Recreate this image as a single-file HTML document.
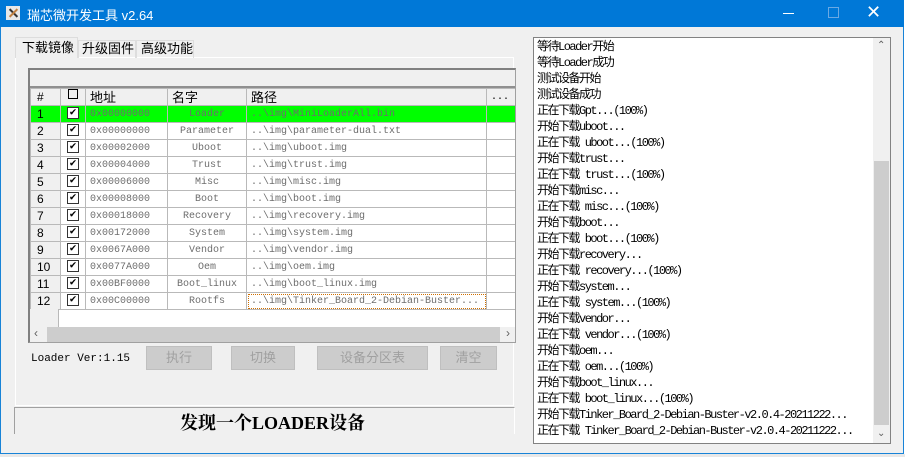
<!DOCTYPE html><html><head><meta charset="utf-8"><style>
*{margin:0;padding:0;box-sizing:border-box}
body{width:905px;height:457px;overflow:hidden;background:#fff;position:relative;font-family:"Liberation Sans","Noto Sans CJK SC",sans-serif}
.a{position:absolute}
.win{left:0;top:0;width:904px;height:454px;border:1px solid #1883d7;background:#f0f0f0}
.title{left:0;top:0;width:904px;height:27px;background:#0078d7;color:#fff;font-size:13px}
.m{font-family:"Liberation Mono","Noto Sans CJK SC",monospace;font-size:11px;color:#000}
table{border-collapse:collapse;table-layout:fixed}
td{border:1px solid #b9b9b9;height:17px;font-family:"Liberation Mono","Noto Sans CJK SC",monospace;font-size:10px;color:#6d6d6d;white-space:nowrap;overflow:hidden;padding:0 4px;line-height:15px}
td.n{color:#000;font-family:"Liberation Sans",sans-serif;font-size:12px;padding-left:6px;background:#f0f0f0}
td.c{text-align:center}
.cb{display:inline-block;width:12px;height:12px;border:1px solid #333;background:#fff;font-size:11px;line-height:10px;text-align:center;color:#000;font-weight:bold;vertical-align:middle}
tr.g td{background:#00ff00}
tr.g td.n{background:#00ff00}
.btn{position:absolute;top:346px;height:24px;background:#cccccc;border:1px solid #bfbfbf;color:#a0a0a0;font-size:13px;text-align:center;line-height:22px}
.log div{height:16px;line-height:16px;white-space:nowrap}
</style></head><body>
<div class="a" style="left:0;top:454px;width:905px;height:3px;background:#e8e8e8"></div>
<div class="a win"></div>
<div class="a title">
 <div class="a" style="left:6px;top:6px;width:14px;height:14px;background:#e8e8e8"><div class="a" style="left:2px;top:6px;width:11px;height:2px;background:#333;transform:rotate(45deg)"></div><div class="a" style="left:2px;top:6px;width:11px;height:2px;background:#c08040;transform:rotate(-45deg)"></div></div>
 <div class="a" style="left:27px;top:5px;font-size:13px">瑞芯微开发工具 v2.64</div>
 <div class="a" style="left:783px;top:13px;width:11px;height:1px;background:#fff"></div>
 <div class="a" style="left:828px;top:7px;width:11px;height:11px;border:1px solid #6aa9e4"></div>
 <div class="a" style="left:866px;top:2px;font-size:18px;font-weight:300">✕</div>
</div>
<!-- tabs -->
<div class="a" style="left:15px;top:57px;width:499px;height:349px;background:#f0f0f0;border:1px solid #fff;border-right-color:#fff"></div>
<div class="a" style="left:15px;top:37px;width:63px;height:21px;background:#f0f0f0;border:1px solid #ddd;border-bottom:none;font-size:13px;line-height:19px;padding-left:6px">下载镜像</div>
<div class="a" style="left:78px;top:40px;width:58px;height:18px;border:1px solid #ddd;border-bottom:none;font-size:13px;line-height:16px;padding-left:3px">升级固件</div>
<div class="a" style="left:136px;top:40px;width:58px;height:18px;border:1px solid #ddd;border-bottom:none;font-size:13px;line-height:16px;padding-left:4px">高级功能</div>
<!-- grid -->
<div class="a" style="left:28px;top:68px;width:488px;height:275px;border:1px solid #a0a0a0;border-top:2px solid #808080;border-left:2px solid #808080;background:#fff;overflow:hidden">
 <div class="a" style="left:0;top:0;width:486px;height:18px;background:#f0f0f0;border-bottom:2px solid #909090"></div>
 <div class="a" style="left:0;top:20px;width:486px;height:15px;background:#f0f0f0"></div>
 <table class="a" style="left:0;top:18px;width:485px">
 <colgroup><col style="width:30px"><col style="width:25px"><col style="width:82px"><col style="width:79px"><col style="width:240px"><col style="width:29px"></colgroup>
 <tr style="background:#f0f0f0"><td class="n" style="height:16px">#</td><td class="c" style="color:#000;background:#f0f0f0"><span style="display:inline-block;width:10px;height:10px;border:1px solid #000"></span></td><td style="color:#000;font-family:'Liberation Sans','Noto Sans CJK SC';font-size:13px;background:#f0f0f0">地址</td><td style="color:#000;font-family:'Liberation Sans','Noto Sans CJK SC';font-size:13px;background:#f0f0f0">名字</td><td style="color:#000;font-family:'Liberation Sans','Noto Sans CJK SC';font-size:13px;background:#f0f0f0">路径</td><td style="background:#f0f0f0;color:#000">...</td></tr>
 <tr class="g"><td class="n">1</td><td class="c"><span class="cb">✔</span></td><td>0x00000000</td><td class="c">Loader</td><td>..\img\MiniLoaderAll.bin</td><td></td></tr>
 <tr><td class="n">2</td><td class="c"><span class="cb">✔</span></td><td>0x00000000</td><td class="c">Parameter</td><td>..\img\parameter-dual.txt</td><td></td></tr>
 <tr><td class="n">3</td><td class="c"><span class="cb">✔</span></td><td>0x00002000</td><td class="c">Uboot</td><td>..\img\uboot.img</td><td></td></tr>
 <tr><td class="n">4</td><td class="c"><span class="cb">✔</span></td><td>0x00004000</td><td class="c">Trust</td><td>..\img\trust.img</td><td></td></tr>
 <tr><td class="n">5</td><td class="c"><span class="cb">✔</span></td><td>0x00006000</td><td class="c">Misc</td><td>..\img\misc.img</td><td></td></tr>
 <tr><td class="n">6</td><td class="c"><span class="cb">✔</span></td><td>0x00008000</td><td class="c">Boot</td><td>..\img\boot.img</td><td></td></tr>
 <tr><td class="n">7</td><td class="c"><span class="cb">✔</span></td><td>0x00018000</td><td class="c">Recovery</td><td>..\img\recovery.img</td><td></td></tr>
 <tr><td class="n">8</td><td class="c"><span class="cb">✔</span></td><td>0x00172000</td><td class="c">System</td><td>..\img\system.img</td><td></td></tr>
 <tr><td class="n">9</td><td class="c"><span class="cb">✔</span></td><td>0x0067A000</td><td class="c">Vendor</td><td>..\img\vendor.img</td><td></td></tr>
 <tr><td class="n">10</td><td class="c"><span class="cb">✔</span></td><td>0x0077A000</td><td class="c">Oem</td><td>..\img\oem.img</td><td></td></tr>
 <tr><td class="n">11</td><td class="c"><span class="cb">✔</span></td><td>0x00BF0000</td><td class="c">Boot_linux</td><td>..\img\boot_linux.img</td><td></td></tr>
 <tr><td class="n">12</td><td class="c"><span class="cb">✔</span></td><td>0x00C00000</td><td class="c">Rootfs</td><td style="outline:1px dotted #d07000;outline-offset:-2px">..\img\Tinker_Board_2-Debian-Buster...</td><td></td></tr>
 </table>
 <div class="a" style="left:0;top:239px;width:29px;height:18px;background:#f0f0f0;border-right:1px solid #b9b9b9"></div>
 <div class="a" style="left:0;top:257px;width:486px;height:17px;background:#f0f0f0"><div class="a" style="left:17px;top:0;width:453px;height:15px;background:#cdcdcd"></div><div class="a" style="left:4px;top:-1px;font-size:12px;color:#606060">‹</div><div class="a" style="left:476px;top:-1px;font-size:12px;color:#606060">›</div></div>
</div>
<div class="a m" style="left:31px;top:353px">Loader Ver:1.15</div>
<div class="btn" style="left:146px;width:66px">执行</div>
<div class="btn" style="left:231px;width:64px">切换</div>
<div class="btn" style="left:317px;width:111px">设备分区表</div>
<div class="btn" style="left:440px;width:57px">清空</div>
<div class="a" style="left:14px;top:407px;width:501px;height:27px;border:1px solid #a0a0a0;border-bottom:none;border-right-color:#fff;text-align:center;font-family:'Liberation Serif','Noto Serif CJK SC',serif;font-weight:bold;font-size:18px;line-height:30px;padding-left:16px;overflow:hidden">发现一个LOADER设备</div>
<!-- log -->
<div class="a" style="left:533px;top:37px;width:358px;height:407px;background:#fff;border:1px solid #828282;overflow:hidden">
 <div class="a m log" style="left:3px;top:1px;font-size:12px;letter-spacing:-1.5px">
 <div>等待Loader开始</div><div>等待Loader成功</div><div>测试设备开始</div><div>测试设备成功</div><div>正在下载Gpt...(100%)</div><div>开始下载uboot...</div><div>正在下载 uboot...(100%)</div><div>开始下载trust...</div><div>正在下载 trust...(100%)</div><div>开始下载misc...</div><div>正在下载 misc...(100%)</div><div>开始下载boot...</div><div>正在下载 boot...(100%)</div><div>开始下载recovery...</div><div>正在下载 recovery...(100%)</div><div>开始下载system...</div><div>正在下载 system...(100%)</div><div>开始下载vendor...</div><div>正在下载 vendor...(100%)</div><div>开始下载oem...</div><div>正在下载 oem...(100%)</div><div>开始下载boot_linux...</div><div>正在下载 boot_linux...(100%)</div><div>开始下载Tinker_Board_2-Debian-Buster-v2.0.4-20211222...</div><div>正在下载 Tinker_Board_2-Debian-Buster-v2.0.4-20211222...</div>
 </div>
 <div class="a" style="left:339px;top:0;width:17px;height:405px;background:#f0f0f0">
  <div class="a" style="left:1px;top:123px;width:15px;height:264px;background:#cdcdcd"></div>
  <div class="a" style="left:4px;top:2px;font-size:10px;color:#606060">⌃</div>
  <div class="a" style="left:4px;top:390px;font-size:10px;color:#606060">⌄</div>
 </div>
</div>
</body></html>
